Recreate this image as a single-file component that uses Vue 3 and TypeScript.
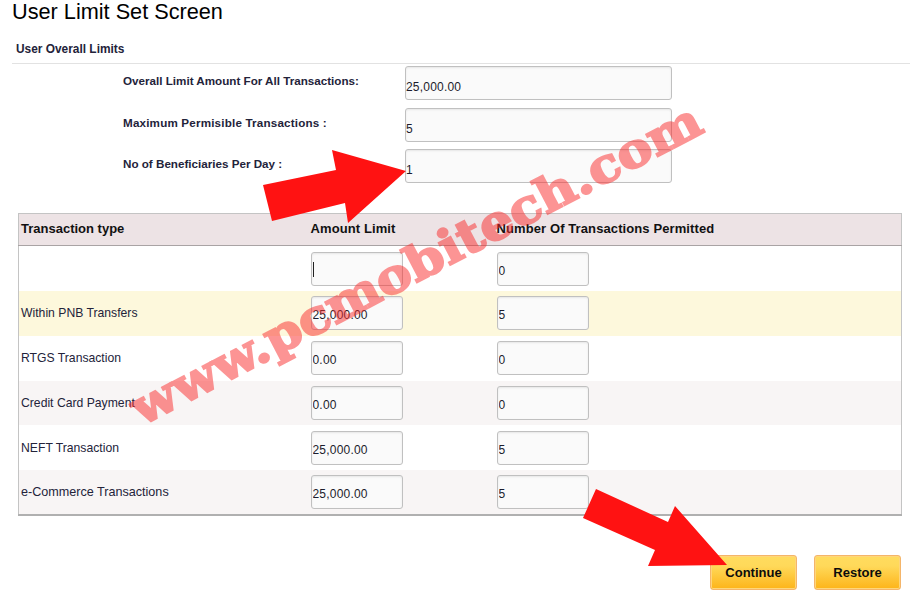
<template>
  <div class="page">
    <h1 class="title">User Limit Set Screen</h1>
    <h2 class="section">User Overall Limits</h2>

    <div class="overall">
      <div v-for="row in overall" :key="row.label" class="overall-row">
        <label class="overall-label" :class="{ loose: row.label.startsWith('Max') }">{{ row.label }}</label>
        <input class="field wide" type="text" :value="row.value" />
      </div>
    </div>

    <table class="limits">
      <thead>
        <tr>
          <th class="col-type">Transaction type</th>
          <th class="col-amount">Amount Limit</th>
          <th>Number Of Transactions Permitted</th>
        </tr>
      </thead>
      <tbody>
        <tr v-for="(row, index) in rows" :key="index" :class="row.tone">
          <td :class="{ spaced: row.name.startsWith('e-') }">{{ row.name }}</td>
          <td>
            <span class="field-wrap">
              <input class="field small" type="text" :value="row.amount" />
              <i v-if="index === 0" class="caret"></i>
            </span>
          </td>
          <td><input class="field small" type="text" :value="row.count" /></td>
        </tr>
      </tbody>
    </table>

    <div class="actions">
      <button class="btn" type="button">Continue</button>
      <button class="btn" type="button">Restore</button>
    </div>

    <div class="watermark">www.pcmobitech.com</div>

    <svg class="arrows" width="920" height="601" viewBox="0 0 920 601">
      <path d="M406 171 L332 150 L336 170 L263 185 L272 221 L345 203 L348 223 Z" fill="#ff1212" />
      <path d="M596 489 L583 518 L655 550 L648 566 L727 565 L675 506 L668 522 Z" fill="#ff1212" />
    </svg>
  </div>
</template>

<script setup lang="ts">
interface LimitRow {
  name: string
  amount: string
  count: string
  tone: string
}

const overall = [
  { label: 'Overall Limit Amount For All Transactions:', value: '25,000.00' },
  { label: 'Maximum Permisible Transactions :', value: '5' },
  { label: 'No of Beneficiaries Per Day :', value: '1' }
]

const rows: LimitRow[] = [
  { name: '', amount: '', count: '0', tone: 'plain' },
  { name: 'Within PNB Transfers', amount: '25,000.00', count: '5', tone: 'yellow' },
  { name: 'RTGS Transaction', amount: '0.00', count: '0', tone: 'plain' },
  { name: 'Credit Card Payment', amount: '0.00', count: '0', tone: 'grey' },
  { name: 'NEFT Transaction', amount: '25,000.00', count: '5', tone: 'plain' },
  { name: 'e-Commerce Transactions', amount: '25,000.00', count: '5', tone: 'grey' }
]
</script>

<style>
html,
body {
  margin: 0;
  background: #fff;
}
</style>

<style scoped>
.page {
  position: relative;
  width: 920px;
  height: 601px;
  overflow: hidden;
  font-family: "Liberation Sans", Arial, sans-serif;
  font-size: 12px;
  color: #23233a;
}
.title {
  margin: 0;
  padding-left: 12px;
  font-size: 21.7px;
  line-height: 24px;
  font-weight: 400;
  color: #000;
}
.section {
  margin: 0 10px 0 12px;
  padding: 19px 0 7px 4px;
  height: 13px;
  font-size: 11.9px;
  line-height: 13px;
  font-weight: 700;
  border-bottom: 1px solid #e2e2e2;
}
.overall {
  display: flex;
  flex-direction: column;
  gap: 7.67px;
  margin-top: 2px;
  padding-left: 123px;
}
.overall-row {
  display: flex;
}
.overall-label {
  width: 282px;
  padding-top: 8px;
  font-size: 11.65px;
  font-weight: 700;
  line-height: 14px;
}
.overall-label.loose {
  letter-spacing: 0.18px;
}
.field {
  box-sizing: border-box;
  height: 34px;
  margin: 0;
  padding: 8px 0 0 0;
  border: 1px solid #c0c0c0;
  border-radius: 3px;
  background: #fafafa;
  box-shadow: inset 0 1px 2px #e6e6e6;
  font-family: "Liberation Sans", Arial, sans-serif;
  font-size: 12px;
  letter-spacing: 0.2px;
  color: #1c1c2c;
  outline: none;
}
.wide {
  width: 267px;
}
.small {
  display: block;
  width: 92px;
  padding: 4px 0 0 1px;
}
.limits {
  width: 884px;
  margin: 29.6px 0 0 18px;
  border-collapse: collapse;
  table-layout: fixed;
  border: 1px solid #c4c4c4;
  border-bottom: 2px solid #b0b0b0;
}
.limits th {
  box-sizing: border-box;
  height: 32.5px;
  padding: 0 0 3px 0;
  background: #ede3e5;
  border-bottom: 1px solid #a9a3a4;
  font-size: 13px;
  font-weight: 700;
  letter-spacing: 0.1px;
  text-align: left;
  color: #111;
}
.col-type {
  width: 292px;
  padding-left: 2px !important;
  letter-spacing: 0 !important;
}
.col-amount {
  width: 186px;
}
.limits td {
  box-sizing: border-box;
  height: 44.9px;
  padding: 0;
  vertical-align: middle;
}
.limits td:first-child {
  padding: 0 0 0 2px;
  font-size: 12.2px;
}
.limits td.spaced {
  font-size: 12.6px;
}
.plain {
  background: #fff;
}
.yellow {
  background: #fdf8dc;
}
.grey {
  background: #f8f5f5;
}
.field-wrap {
  position: relative;
  display: block;
  width: 92px;
}
.caret {
  position: absolute;
  left: 2px;
  top: 10px;
  width: 1px;
  height: 15px;
  background: #222;
}
.actions {
  display: flex;
  justify-content: flex-end;
  gap: 17px;
  margin-top: 38.6px;
  padding-right: 19px;
}
.btn {
  box-sizing: border-box;
  width: 87px;
  height: 35px;
  padding: 1px 0 0;
  border: 1px solid #f4b56a;
  border-radius: 3px;
  background: linear-gradient(#ffdc5f 0%, #ffd95a 30%, #fdb419 100%);
  box-shadow: inset 0 0 0 1px #ffd67a;
  font-family: "Liberation Sans", Arial, sans-serif;
  font-size: 13px;
  font-weight: 700;
  color: #0c0c0c;
}
.watermark {
  position: absolute;
  left: 143px;
  top: 389px;
  transform: rotate(-27.6deg) scaleX(1.1);
  transform-origin: left bottom;
  font-family: "DejaVu Serif", serif;
  font-size: 48px;
  font-weight: 700;
  line-height: 40px;
  white-space: nowrap;
  color: #fa2c2c;
  -webkit-text-stroke: 2px #fa2c2c;
  opacity: 0.5;
  pointer-events: none;
}
.arrows {
  position: absolute;
  left: 0;
  top: 0;
  pointer-events: none;
}
</style>
